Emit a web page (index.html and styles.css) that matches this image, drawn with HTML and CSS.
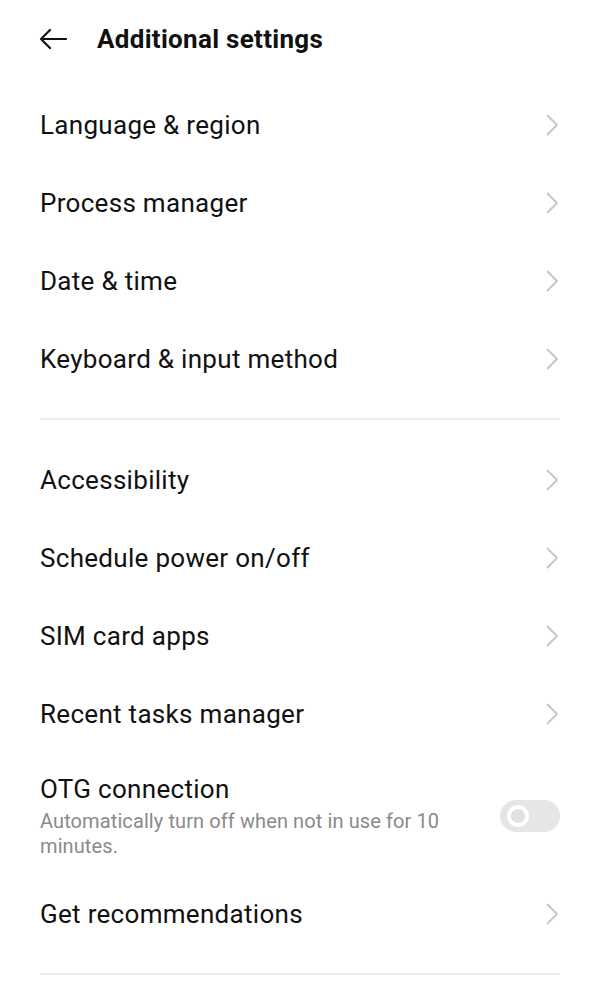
FILE: index.html
```html
<!DOCTYPE html>
<html lang="en">
<head>
<meta charset="utf-8">
<title>Additional settings</title>
<link rel="stylesheet" href="styles.css">
</head>
<body>
<div class="screen">
  <header class="topbar">
    <svg class="back" width="28" height="20" viewBox="0 0 28 20" aria-hidden="true">
      <path d="M27 10H2M11 1L2 10l9 9" fill="none" stroke="#111" stroke-width="2.2" stroke-linecap="round" stroke-linejoin="round"/>
    </svg>
    <h1 class="title">Additional settings</h1>
  </header>

  <ul class="group">
    <li class="row"><span class="label">Language &amp; region</span><svg class="chev" width="13" height="22" viewBox="0 0 13 22"><path d="M1.5 1.5L11 11l-9.5 9.5"/></svg></li>
    <li class="row"><span class="label">Process manager</span><svg class="chev" width="13" height="22" viewBox="0 0 13 22"><path d="M1.5 1.5L11 11l-9.5 9.5"/></svg></li>
    <li class="row"><span class="label">Date &amp; time</span><svg class="chev" width="13" height="22" viewBox="0 0 13 22"><path d="M1.5 1.5L11 11l-9.5 9.5"/></svg></li>
    <li class="row"><span class="label">Keyboard &amp; input method</span><svg class="chev" width="13" height="22" viewBox="0 0 13 22"><path d="M1.5 1.5L11 11l-9.5 9.5"/></svg></li>
  </ul>
  <div class="divider"></div>
  <ul class="group">
    <li class="row"><span class="label">Accessibility</span><svg class="chev" width="13" height="22" viewBox="0 0 13 22"><path d="M1.5 1.5L11 11l-9.5 9.5"/></svg></li>
    <li class="row"><span class="label">Schedule power on/off</span><svg class="chev" width="13" height="22" viewBox="0 0 13 22"><path d="M1.5 1.5L11 11l-9.5 9.5"/></svg></li>
    <li class="row"><span class="label">SIM card apps</span><svg class="chev" width="13" height="22" viewBox="0 0 13 22"><path d="M1.5 1.5L11 11l-9.5 9.5"/></svg></li>
    <li class="row"><span class="label">Recent tasks manager</span><svg class="chev" width="13" height="22" viewBox="0 0 13 22"><path d="M1.5 1.5L11 11l-9.5 9.5"/></svg></li>
    <li class="row row-tall">
      <div class="text">
        <span class="label">OTG connection</span>
        <span class="sub">Automatically turn off when not in use for 10 minutes.</span>
      </div>
      <span class="toggle"><span class="knob"></span></span>
    </li>
    <li class="row"><span class="label">Get recommendations</span><svg class="chev" width="13" height="22" viewBox="0 0 13 22"><path d="M1.5 1.5L11 11l-9.5 9.5"/></svg></li>
  </ul>
  <div class="divider"></div>
</div>
</body>
</html>
```

FILE: styles.css
```css
* { box-sizing: border-box; }
html, body { margin: 0; padding: 0; background: #fff; }
body {
  font-family: Roboto, "Noto Sans", "Liberation Sans", sans-serif;
  color: #111;
  width: 600px;
  height: 1000px;
  overflow: hidden;
}
.screen { padding: 0 40px; }
.topbar {
  height: 86px;
  display: flex;
  align-items: center;
  gap: 30px;
  padding-bottom: 8px;
}
.back { flex: none; display: block; margin-left: -1px; }
.title {
  margin: 0;
  font-size: 26px;
  font-weight: 700;
  letter-spacing: 0.3px;
  color: #111;
}
.group { list-style: none; margin: 0; padding: 0; }
.row {
  height: 78px;
  display: flex;
  align-items: center;
  justify-content: space-between;
}
.label {
  font-size: 26px;
  color: #111;
  letter-spacing: 0.3px;
}
.chev {
  flex: none;
  display: block;
  margin-right: 1px;
}
.chev path {
  fill: none;
  stroke: #c6c6c6;
  stroke-width: 1.8;
  stroke-linecap: round;
  stroke-linejoin: round;
}
.divider {
  height: 2px;
  background: #ededed;
  margin: 20px 0 21px;
}
.row-tall {
  height: 122px;
  padding: 20px 0 16px;
  align-items: center;
}
.text { display: flex; flex-direction: column; width: 420px; }
.text .label { line-height: 30px; }
.sub {
  margin-top: 5px;
  font-size: 20px;
  line-height: 25px;
  color: #8a8a8a;
  letter-spacing: 0.1px;
}
.toggle {
  flex: none;
  width: 60px;
  height: 32px;
  border-radius: 16px;
  background: #e6e6e6;
  display: flex;
  align-items: center;
  padding-left: 7px;
}
.knob {
  width: 22px;
  height: 22px;
  border-radius: 50%;
  border: 4px solid #fff;
  background: #e0e0e0;
}
```
